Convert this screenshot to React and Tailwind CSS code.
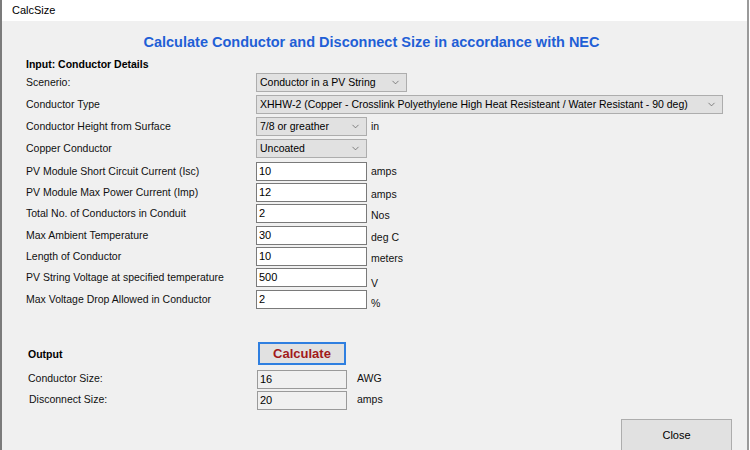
import { ChevronDown } from 'lucide-react';

const font = { fontFamily: '"Liberation Sans", Arial, sans-serif' };

function Dropdown({ value, width }) {
  return (
    <div className={`flex items-center justify-between h-[19px] bg-[#e1e1e1] border border-[#adadad] pl-[3px] pr-[5px] text-[10.5px] text-black ${width}`}>
      <span className="whitespace-nowrap">{value}</span>
      <ChevronDown size={11} strokeWidth={1.5} className="text-[#555] shrink-0" />
    </div>
  );
}

function TextBox({ value, width = 'w-[111px]', readOnly }) {
  return (
    <div className={`flex items-center h-[19px] border px-[2px] text-[11px] text-black ${width} ${readOnly ? 'bg-[#f0f0f0] border-[#9a9a9a]' : 'bg-white border-[#7a7a7a]'}`}>
      {value}
    </div>
  );
}

const rows = [
  { label: 'Scenerio:', h: 'h-[22px]', control: <Dropdown value="Conductor in a PV String" width="w-[151px]" /> },
  { label: 'Conductor Type', h: 'h-[22px]', control: <Dropdown value="XHHW-2 (Copper - Crosslink Polyethylene High Heat Resisteant / Water Resistant - 90 deg)" width="w-[467px]" /> },
  { label: 'Conductor Height from Surface', h: 'h-[22px]', control: <Dropdown value="7/8 or greather" width="w-[111px]" />, unit: 'in', unitPad: 'pt-[2px]' },
  { label: 'Copper Conductor', h: 'h-[23px]', control: <Dropdown value="Uncoated" width="w-[111px]" /> },
  { label: 'PV Module Short Circuit Current (Isc)', h: 'h-[21px]', control: <TextBox value="10" />, unit: 'amps', unitPad: 'pt-[2px]' },
  { label: 'PV Module Max Power Current (Imp)', h: 'h-[21px]', control: <TextBox value="12" />, unit: 'amps', unitPad: 'pt-[4px]' },
  { label: 'Total No. of Conductors in Conduit', h: 'h-[22px]', control: <TextBox value="2" />, unit: 'Nos', unitPad: 'pt-[4px]' },
  { label: 'Max Ambient Temperature', h: 'h-[21px]', control: <TextBox value="30" />, unit: 'deg C', unitPad: 'pt-[4px]' },
  { label: 'Length of Conductor', h: 'h-[21px]', control: <TextBox value="10" />, unit: 'meters', unitPad: 'pt-[4px]' },
  { label: 'PV String Voltage at specified temperature', h: 'h-[22px]', control: <TextBox value="500" />, unit: 'V', unitPad: 'pt-[8px]' },
  { label: 'Max Voltage Drop Allowed in Conductor', h: 'h-[21px]', control: <TextBox value="2" />, unit: '%', unitPad: 'pt-[6px]' },
];

export default function App() {
  return (
    <div className="w-[750px] h-[450px] overflow-hidden bg-white" style={font}>
      <div className="w-[749px] h-[450px] flex flex-col border-l-2 border-l-[#7b7b7b] border-r-2 border-r-[#9a9a9a]">
        {/* title bar */}
        <div className="h-[21px] bg-white flex items-center pl-[10px] text-[11px] text-black shrink-0">CalcSize</div>

        <div className="flex-1 bg-[#f0f0f0] flex flex-col text-[10.5px] text-[#111]">
          <div className="h-[23px] mt-[10px] flex items-center justify-center text-[14.5px] font-bold text-[#1f5fd6] pr-[6px] whitespace-nowrap">
            Calculate Conductor and Disconnect Size in accordance with NEC
          </div>

          <div className="pl-[24px] mt-[3px] h-[16px] flex items-center font-bold text-[10.5px] text-black">Input: Conductor Details</div>

          <div className="flex flex-col">
            {rows.map((r) => (
              <div key={r.label} className={`flex items-start ${r.h}`}>
                <div className="w-[254px] pl-[24px] h-[19px] flex items-center whitespace-nowrap">{r.label}</div>
                {r.control}
                {r.unit && <div className={`pl-[4px] text-[10.5px] ${r.unitPad}`}>{r.unit}</div>}
              </div>
            ))}
          </div>

          {/* output */}
          <div className="flex items-center mt-[31px] h-[23px]">
            <div className="w-[256px] pl-[26px] font-bold text-[10.5px] text-black pt-[3px]">Output</div>
            <button type="button" className="w-[88px] h-[23px] bg-[#e1e1e1] border-2 border-[#2f7fe0] text-[13px] font-bold text-[#a11a1a]">
              Calculate
            </button>
          </div>
          <div className="flex items-center h-[20px] mt-[4px]">
            <div className="w-[255px] pl-[26px]">Conductor Size:</div>
            <TextBox value="16" width="w-[90px]" readOnly />
            <div className="pl-[10px]">AWG</div>
          </div>
          <div className="flex items-center h-[20px] mt-[1px]">
            <div className="w-[255px] pl-[27px]">Disconnect Size:</div>
            <TextBox value="20" width="w-[90px]" readOnly />
            <div className="pl-[10px] text-[10.5px]">amps</div>
          </div>

          <div className="flex justify-end mt-[9px] pr-[15px]">
            <button type="button" className="w-[111px] h-[34px] bg-[#e1e1e1] border border-[#adadad] text-[11px] text-black pb-[2px]">
              Close
            </button>
          </div>
        </div>
      </div>
    </div>
  );
}
